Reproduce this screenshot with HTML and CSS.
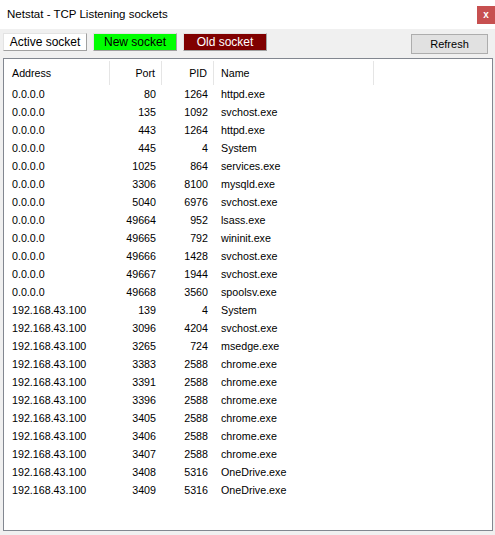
FILE: index.html
```html
<!DOCTYPE html>
<html>
<head>
<meta charset="utf-8">
<link rel="stylesheet" href="styles.css">
</head>
<body>
<div class="window">
  <div class="titlebar">
    <span class="title">Netstat - TCP Listening sockets</span>
    <span class="close">x</span>
  </div>
  <div class="toolbar">
    <div class="legend">
      <span class="tag tag-active">Active socket</span>
      <span class="tag tag-new">New socket</span>
      <span class="tag tag-old">Old socket</span>
    </div>
    <button class="refresh">Refresh</button>
  </div>
  <div class="listbox">
    <div class="row head">
      <div class="cell sep">Address</div>
      <div class="cell num sep">Port</div>
      <div class="cell num sep">PID</div>
      <div class="cell name sep">Name</div>
      <div class="cell"></div>
    </div>
    <div class="row"><div class="cell">0.0.0.0</div><div class="cell num">80</div><div class="cell num">1264</div><div class="cell name">httpd.exe</div></div>
    <div class="row"><div class="cell">0.0.0.0</div><div class="cell num">135</div><div class="cell num">1092</div><div class="cell name">svchost.exe</div></div>
    <div class="row"><div class="cell">0.0.0.0</div><div class="cell num">443</div><div class="cell num">1264</div><div class="cell name">httpd.exe</div></div>
    <div class="row"><div class="cell">0.0.0.0</div><div class="cell num">445</div><div class="cell num">4</div><div class="cell name">System</div></div>
    <div class="row"><div class="cell">0.0.0.0</div><div class="cell num">1025</div><div class="cell num">864</div><div class="cell name">services.exe</div></div>
    <div class="row"><div class="cell">0.0.0.0</div><div class="cell num">3306</div><div class="cell num">8100</div><div class="cell name">mysqld.exe</div></div>
    <div class="row"><div class="cell">0.0.0.0</div><div class="cell num">5040</div><div class="cell num">6976</div><div class="cell name">svchost.exe</div></div>
    <div class="row"><div class="cell">0.0.0.0</div><div class="cell num">49664</div><div class="cell num">952</div><div class="cell name">lsass.exe</div></div>
    <div class="row"><div class="cell">0.0.0.0</div><div class="cell num">49665</div><div class="cell num">792</div><div class="cell name">wininit.exe</div></div>
    <div class="row"><div class="cell">0.0.0.0</div><div class="cell num">49666</div><div class="cell num">1428</div><div class="cell name">svchost.exe</div></div>
    <div class="row"><div class="cell">0.0.0.0</div><div class="cell num">49667</div><div class="cell num">1944</div><div class="cell name">svchost.exe</div></div>
    <div class="row"><div class="cell">0.0.0.0</div><div class="cell num">49668</div><div class="cell num">3560</div><div class="cell name">spoolsv.exe</div></div>
    <div class="row"><div class="cell">192.168.43.100</div><div class="cell num">139</div><div class="cell num">4</div><div class="cell name">System</div></div>
    <div class="row"><div class="cell">192.168.43.100</div><div class="cell num">3096</div><div class="cell num">4204</div><div class="cell name">svchost.exe</div></div>
    <div class="row"><div class="cell">192.168.43.100</div><div class="cell num">3265</div><div class="cell num">724</div><div class="cell name">msedge.exe</div></div>
    <div class="row"><div class="cell">192.168.43.100</div><div class="cell num">3383</div><div class="cell num">2588</div><div class="cell name">chrome.exe</div></div>
    <div class="row"><div class="cell">192.168.43.100</div><div class="cell num">3391</div><div class="cell num">2588</div><div class="cell name">chrome.exe</div></div>
    <div class="row"><div class="cell">192.168.43.100</div><div class="cell num">3396</div><div class="cell num">2588</div><div class="cell name">chrome.exe</div></div>
    <div class="row"><div class="cell">192.168.43.100</div><div class="cell num">3405</div><div class="cell num">2588</div><div class="cell name">chrome.exe</div></div>
    <div class="row"><div class="cell">192.168.43.100</div><div class="cell num">3406</div><div class="cell num">2588</div><div class="cell name">chrome.exe</div></div>
    <div class="row"><div class="cell">192.168.43.100</div><div class="cell num">3407</div><div class="cell num">2588</div><div class="cell name">chrome.exe</div></div>
    <div class="row"><div class="cell">192.168.43.100</div><div class="cell num">3408</div><div class="cell num">5316</div><div class="cell name">OneDrive.exe</div></div>
    <div class="row"><div class="cell">192.168.43.100</div><div class="cell num">3409</div><div class="cell num">5316</div><div class="cell name">OneDrive.exe</div></div>
  </div>
</div>
</body>
</html>
```
FILE: styles.css
```css
html, body {
  margin: 0;
  padding: 0;
  background: #f0f0f0;
}
.window {
  width: 495px;
  height: 535px;
  display: flex;
  flex-direction: column;
  font-family: "Liberation Sans", Arial, sans-serif;
  color: #000;
  background: #f0f0f0;
}
.titlebar {
  height: 29px;
  background: #fff;
  display: flex;
  align-items: flex-start;
  justify-content: space-between;
  box-sizing: border-box;
}
.title {
  font-size: 11.5px;
  line-height: 14px;
  margin: 7px 0 0 7px;
}
.close {
  width: 18px;
  height: 18px;
  margin-top: 6px;
  background: #c75050;
  color: #fff;
  font-weight: bold;
  font-size: 10px;
  line-height: 17px;
  text-align: center;
}
.toolbar {
  height: 29px;
  display: flex;
  justify-content: space-between;
  align-items: flex-start;
  padding: 4px 7px 0 3px;
  box-sizing: border-box;
}
.legend {
  display: flex;
  gap: 6px;
}
.tag {
  width: 84px;
  height: 18px;
  box-sizing: border-box;
  font-size: 12px;
  line-height: 16px;
  text-align: center;
  border: 1px solid;
  border-color: #e3e3e3 #a0a0a0 #a0a0a0 #e3e3e3;
}
.tag-active { background: #fff; }
.tag-new { background: #00ff00; }
.tag-old { background: #800000; color: #fff; }
.refresh {
  width: 77px;
  height: 20px;
  margin-top: 1px;
  box-sizing: border-box;
  border: 1px solid #adadad;
  background: #e1e1e1;
  font-family: "Liberation Sans", Arial, sans-serif;
  font-size: 11px;
  color: #000;
  padding: 0;
}
.listbox {
  margin: 0 2px 4px 3px;
  flex: 1;
  background: #fff;
  border: 1px solid #828790;
  font-size: 10.7px;
}
.row {
  display: grid;
  grid-template-columns: 106px 52px 52px 160px 1fr;
  height: 18px;
  align-items: center;
}
.row.head {
  height: 26px;
  align-items: stretch;
}
.head .cell {
  display: flex;
  align-items: center;
  margin-top: 2px;
}
.head .cell.num {
  justify-content: flex-end;
}
.cell {
  padding-left: 8px;
  white-space: nowrap;
  line-height: 19px;
}
.cell.num {
  padding-left: 0;
  padding-right: 6px;
  text-align: right;
}
.cell.name {
  padding-left: 7px;
}
.sep {
  border-right: 1px solid #e5e5e5;
}
```
